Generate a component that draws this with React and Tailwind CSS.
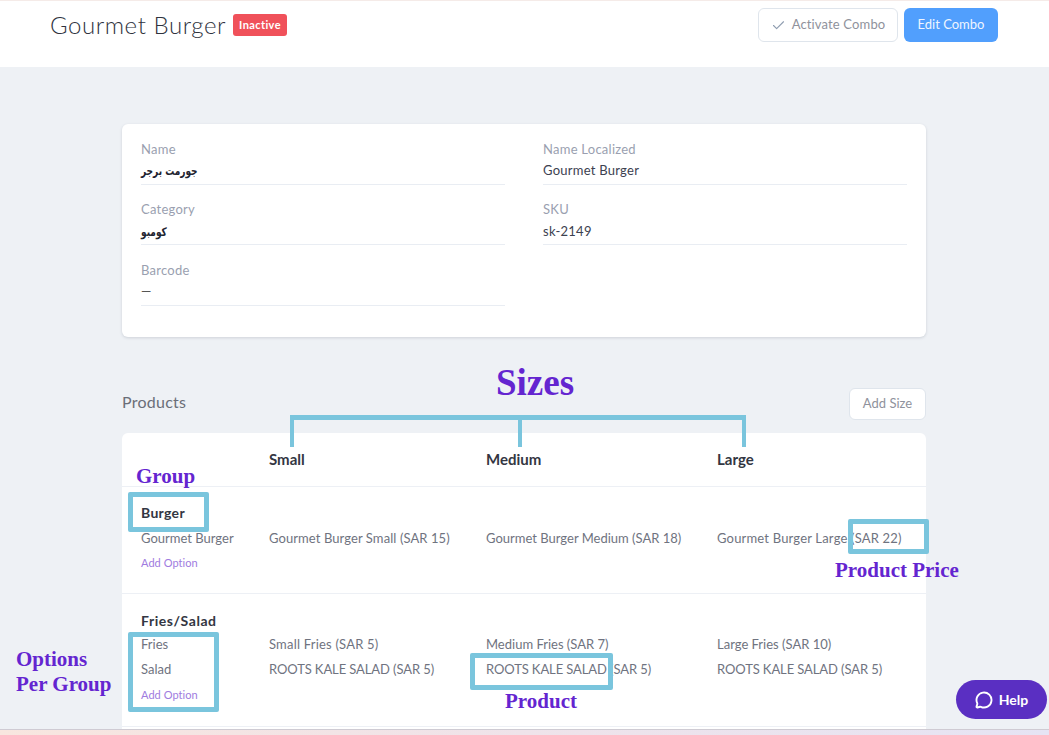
import React from "react";
import { Check, MessageCircle } from "lucide-react";

const font = { fontFamily: '"Lato", "Noto Sans", "DejaVu Sans", sans-serif' };

function Field({ label, value, arabic, dash }) {
  return (
    <div className="h-[60.5px]">
      <div className="text-[13px] leading-[18px] tracking-[0.25px] text-[#9a9fb0] pt-[15.5px] h-[34px]">{label}</div>
      <div className={`h-[26.5px] border-b border-[#e9edf3] text-[13px] leading-[20px] pt-[2px] ${dash ? "text-[#555]" : "text-[#3c4150] tracking-[0.25px]"}`}>
        {arabic ? (
          <span className="inline-block origin-left scale-x-[0.75] font-bold text-[12px] text-[#1f2430] tracking-normal [font-family:'DejaVu_Sans',sans-serif]">{value}</span>
        ) : value}
      </div>
    </div>
  );
}

function Box({ className }) {
  return <div className={`absolute border-[5px] border-[#7ac5dd] rounded-[2px] ${className}`} />;
}

function Note({ className, children }) {
  return <div className={`absolute font-bold text-[#6425d0] whitespace-nowrap [font-family:'Liberation_Serif',serif] ${className}`}>{children}</div>;
}

export default function App() {
  return (
    <div style={font} className="relative w-[1049px] h-[735px] overflow-hidden bg-[#eef1f5]">
      <div className="h-[1px] bg-[#f5ebe8]" />
      <header className="h-[66px] bg-white flex justify-between pl-[50px] pr-[51px]">
        <div className="flex items-start pt-[10px] gap-[7px]">
          <h1 className="text-[24px] leading-[28px] font-light text-[#2f333e] tracking-[0.55px]">Gourmet Burger</h1>
          <span className="mt-[3px] h-[22px] w-[54px] rounded-[3px] bg-[#f0515a] text-white text-[11px] font-bold leading-[22px] text-center tracking-[0.4px]">Inactive</span>
        </div>
        <div className="flex items-start gap-[6px] pt-[7px]">
          <button className="h-[34px] w-[140px] rounded-[6px] border border-[#dfe5ec] bg-white text-[13px] tracking-[0.15px] text-[#8f929c] flex items-center justify-center gap-[6px]">
            <Check size={15} strokeWidth={1.75} className="text-[#8f9db0]" />
            Activate Combo
          </button>
          <button className="h-[34px] w-[94px] rounded-[6px] bg-[#519ffd] text-[13px] text-[#eef5ff]">Edit Combo</button>
        </div>
      </header>

      <main className="pl-[122px] pr-[123px] pt-[57px]">
        <section className="h-[213px] bg-white rounded-[6px] shadow-[0_1px_3px_rgba(60,70,90,0.18)] px-[19px] grid grid-cols-2 gap-x-[38px] content-start">
          <Field label="Name" value="جورمت برجر" arabic />
          <Field label="Name Localized" value="Gourmet Burger" />
          <Field label="Category" value="كومبو" arabic />
          <Field label="SKU" value="sk-2149" />
          <Field label="Barcode" value="—" dash />
        </section>

        <div className="mt-[51px] h-[45px] flex justify-between items-start">
          <h2 className="text-[16px] leading-[28px] tracking-[0.25px] text-[#6a6e78]">Products</h2>
          <button className="h-[32px] w-[77px] rounded-[6px] border border-[#dfe5ec] bg-white text-[13px] text-[#8f929c]">Add Size</button>
        </div>

        <section className="h-[296px] bg-white rounded-t-[6px]">
          <div className="h-[54px] border-b border-[#edf0f5] px-[19px] pt-[16px] grid grid-cols-[128px_217px_231px_1fr] text-[15px] leading-[20px] font-bold text-[#333642]">
            <div />
            <div>Small</div>
            <div>Medium</div>
            <div>Large</div>
          </div>
          <div className="pt-[16px] h-[107px] border-b border-[#edf0f5] px-[19px]">
            <div className="text-[14px] leading-[20px] font-bold text-[#333642] tracking-[0.3px]">Burger</div>
            <div className="mt-[3px] text-[13px] text-[#6f7380] grid grid-cols-[128px_217px_231px_1fr]">
              <div className="h-[25px] leading-[25px]">Gourmet Burger</div>
              <div className="h-[25px] leading-[25px] tracking-[0.08px]">Gourmet Burger Small (SAR 15)</div>
              <div className="h-[25px] leading-[25px]">Gourmet Burger Medium (SAR 18)</div>
              <div className="h-[25px] leading-[25px] tracking-[0.18px]">Gourmet Burger Large (SAR 22)</div>
              <div className="h-[24px] leading-[24px] text-[11px] tracking-[0.05px] text-[#a07be0] col-span-4">Add Option</div>
            </div>
          </div>
          <div className="pt-[17px] h-[133px] border-b border-[#edf0f5] px-[19px]">
            <div className="text-[14px] leading-[20px] font-bold text-[#333642] tracking-[0.55px]">Fries/Salad</div>
            <div className="mt-[1px] text-[13px] text-[#6f7380] grid grid-cols-[128px_217px_231px_1fr]">
              <div className="h-[25px] leading-[25px]">Fries</div>
              <div className="h-[25px] leading-[25px] tracking-[0.2px]">Small Fries (SAR 5)</div>
              <div className="h-[25px] leading-[25px]">Medium Fries (SAR 7)</div>
              <div className="h-[25px] leading-[25px]">Large Fries (SAR 10)</div>
              <div className="h-[25px] leading-[25px]">Salad</div>
              <div className="h-[25px] leading-[25px] tracking-[-0.1px]">ROOTS KALE SALAD (SAR 5)</div>
              <div className="h-[25px] leading-[25px] tracking-[-0.1px]">ROOTS KALE SALAD (SAR 5)</div>
              <div className="h-[25px] leading-[25px] tracking-[-0.1px]">ROOTS KALE SALAD (SAR 5)</div>
              <div className="h-[25px] leading-[25px] text-[11px] tracking-[0.05px] text-[#a07be0] col-span-4">Add Option</div>
            </div>
          </div>
        </section>
      </main>

      <div className="absolute left-0 right-0 bottom-0 h-[6px] border-t border-[#cfcbd3] bg-gradient-to-r from-[#f8e6df] via-[#efe3ea] to-[#e6e4f4]" />

      {/* annotations laid over the screenshot */}
      <Note className="left-[496px] top-[362px] text-[37px] leading-[42px]">Sizes</Note>
      <div className="absolute left-[290px] top-[415px] w-[456px] h-[32px] border-t-[5px] border-x-[4px] border-[#7ac5dd]" />
      <div className="absolute left-[518px] top-[415px] w-[4px] h-[32px] bg-[#7ac5dd]" />
      <Note className="left-[136px] top-[463px] text-[21px] leading-[26px]">Group</Note>
      <Box className="left-[128px] top-[492px] w-[81px] h-[40px]" />
      <Box className="left-[848px] top-[519px] w-[81px] h-[35px]" />
      <Note className="left-[835px] top-[557px] text-[21px] leading-[26px]">Product Price</Note>
      <Note className="left-[16px] top-[647px] text-[21px] leading-[24.5px]">Options<br />Per Group</Note>
      <Box className="left-[128px] top-[632px] w-[91px] h-[80px]" />
      <Box className="left-[470px] top-[653px] w-[143px] h-[37px]" />
      <Note className="left-[505px] top-[688px] text-[21px] leading-[26px]">Product</Note>

      <div className="absolute left-[956px] top-[680px] w-[91px] h-[39px] rounded-full bg-[#5a2fc2] text-white flex items-center justify-center gap-[6px] text-[14px] font-bold">
        <MessageCircle size={18} strokeWidth={2.5} />
        Help
      </div>
    </div>
  );
}
